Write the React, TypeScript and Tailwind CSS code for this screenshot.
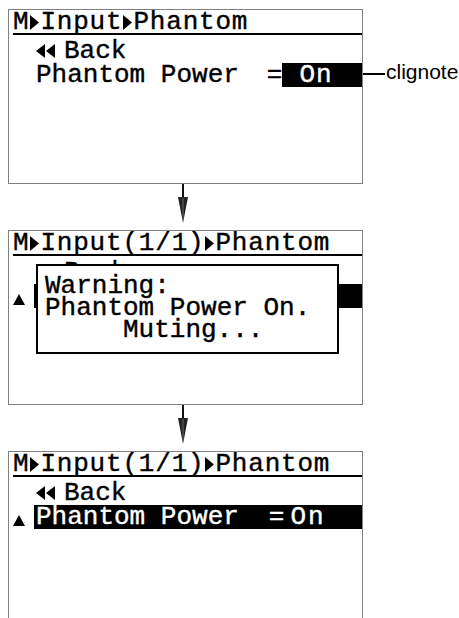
import React from 'react';

// small solid triangles used by the LCD font (menu arrows, back arrows, cursor)
const ArrowRight = () => (
  <svg width="9" height="15" viewBox="0 0 9 15" className="inline-block mx-[1px] align-[-1px]">
    <path d="M0 0 L9 7.5 L0 15 Z" fill="currentColor" />
  </svg>
);

const ArrowLeft = () => (
  <svg width="9" height="14" viewBox="0 0 9 14" className="inline-block mr-[1px]">
    <path d="M9 0 L0 7 L9 14 Z" fill="currentColor" />
  </svg>
);

const Cursor = () => (
  <svg width="12" height="11" viewBox="0 0 12 11" className="block">
    <path d="M6 0 L12 11 L0 11 Z" fill="currentColor" />
  </svg>
);

const Title = ({ page }: { page?: string }) => (
  <div className="ml-[4px] mt-[1px] h-[24px] border-b-2 border-black leading-[22px] tracking-[0.8px] whitespace-pre">
    M<ArrowRight />Input{page}<ArrowRight />Phantom
  </div>
);

const BackRow = () => (
  <div className="flex h-[24px] leading-[24px]">
    <div className="w-[25px]" />
    <div className="pl-[2px] flex items-center">
      <ArrowLeft />
      <ArrowLeft />
      <span className="ml-[8px]">Back</span>
    </div>
  </div>
);

// selected row: cursor mark plus inverted line
const SelectedRow = () => (
  <div className="flex h-[24px] leading-[24px]">
    <div className="w-[25px] flex items-end pb-[3px] pl-[4px]">
      <Cursor />
    </div>
    <div className="flex-1 flex bg-black text-white pl-[2px] whitespace-pre">
      <span>Phantom Power</span>
      <span className="ml-[30px]">=</span>
      <span className="ml-[6px] tracking-[2px]">On</span>
    </div>
  </div>
);

const Screen = ({ children }: { children: React.ReactNode }) => (
  <div className="relative w-[355px] h-[175px] shrink-0 border border-[#808080] bg-white overflow-hidden">
    {children}
  </div>
);

const DownArrow = () => (
  <div className="ml-[169px] h-[46px]">
    <svg width="12" height="40" viewBox="0 0 12 40" className="block">
      <rect x="5" y="0" width="2" height="14" fill="#111" />
      <path d="M1 13 L11 13 L6 39 Z" fill="#222" />
      <path d="M6 14 L6 36" stroke="#666" strokeWidth="1" />
    </svg>
  </div>
);

export default function App() {
  return (
    <div className="w-[459px] h-[618px] overflow-hidden bg-white text-black">
      <div className="pl-[8px] pt-[9px] font-['Liberation_Mono',monospace] text-[26px] [-webkit-text-stroke:0.4px_currentColor]">
        {/* value being edited, highlighted cell blinks */}
        <div className="flex items-start">
          <Screen>
            <Title />
            <div className="pt-[4px]">
              <BackRow />
              <div className="flex h-[24px] leading-[24px]">
                <div className="w-[25px]" />
                <span className="pl-[2px] whitespace-pre">Phantom Power</span>
                <span className="ml-[28px]">=</span>
                <div className="flex-1 bg-black text-white pl-[17px] tracking-[1px]">On</div>
              </div>
            </div>
          </Screen>
          <div className="mt-[53px] h-[24px] flex items-center [-webkit-text-stroke:0px]">
            <div className="w-[22px] h-[1.5px] bg-black" />
            <span className="ml-[1px] mb-[5px] font-['Liberation_Sans',Arial,sans-serif] text-[21px] leading-[21px] whitespace-nowrap">
              clignote
            </span>
          </div>
        </div>

        <DownArrow />

        {/* confirmation dialog shown while the input mutes */}
        <Screen>
          <Title page="(1/1)" />
          <div className="pt-[4px]">
            <BackRow />
            <SelectedRow />
          </div>
          <div className="absolute left-[27px] top-[33px] w-[303px] h-[90px] border-2 border-black bg-white pl-[7px] pt-[9px] leading-[22px] whitespace-pre">
            <div>Warning:</div>
            <div>Phantom Power On.</div>
            <div className="pl-[78px]">Muting...</div>
          </div>
        </Screen>

        <DownArrow />

        {/* setting applied */}
        <Screen>
          <Title page="(1/1)" />
          <div className="pt-[4px]">
            <BackRow />
            <SelectedRow />
          </div>
        </Screen>
      </div>
    </div>
  );
}
